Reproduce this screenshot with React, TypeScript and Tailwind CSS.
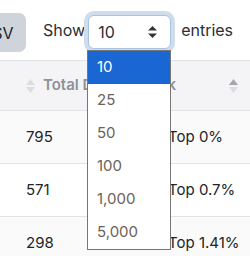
import React from "react";

const options = ["10", "25", "50", "100", "1,000", "5,000"];

const rows = [
  { total: "795", rank: "Top 0%", striped: true },
  { total: "571", rank: "Top 0.7%", striped: false },
  { total: "298", rank: "Top 1.41%", striped: true },
];

const SortIcon = ({ active = false }: { active?: boolean }) => (
  <svg width="9" height="14" viewBox="0 0 9 14">
    <path d="M4.5 0 L9 6 L0 6 Z" fill={active ? "#a3a6ab" : "#dcdde0"} />
    <path d="M4.5 14 L9 8 L0 8 Z" fill="#dcdde0" />
  </svg>
);

const App = () => {
  return (
    <div className="relative w-[250px] h-[256px] overflow-hidden bg-white font-['Inter',sans-serif] text-[#212529]">
      {/* toolbar */}
      <div className="h-[60px] flex items-center">
        <button className="-ml-[32px] mt-[5px] w-[58px] h-[39px] bg-[#ced4da] rounded-[7px] text-[16px] text-[#212529]">
          CSV
        </button>
        <span className="ml-[17px] text-[16px] text-[#2b2f33]">Show</span>
        <div className="ml-[3px] mt-[3px] w-[83px] h-[34px] flex items-center justify-between pl-[9px] pr-[13px] border border-[#a8c3e6] rounded-[6px] ring-4 ring-[#cfdcec] bg-white">
          <span className="text-[16px] text-[#2b2f33]">10</span>
          <svg width="9" height="12" viewBox="0 0 9 12">
            <path d="M4.5 0 L9 4.5 L0 4.5 Z" fill="#33373b" />
            <path d="M4.5 12 L9 7.5 L0 7.5 Z" fill="#33373b" />
          </svg>
        </div>
        <span className="ml-[10px] text-[16px] text-[#2b2f33]">entries</span>
      </div>

      {/* table header */}
      <div className="h-[51px] flex items-center bg-[#f4f4f6] border-t border-b border-[#e2e3e6]">
        <div className="ml-[26px]">
          <SortIcon />
        </div>
        <span className="ml-[8px] w-[97px] whitespace-nowrap overflow-hidden text-[15px] font-semibold text-[#8d9198]">
          Total Donations
        </span>
        <span className="text-[15px] font-semibold text-[#8d9198]">Rank</span>
        <div className="ml-auto mr-[12px]">
          <SortIcon active />
        </div>
      </div>

      {/* rows */}
      {rows.map((r) => (
        <div
          key={r.total}
          className={`h-[53px] flex items-center border-b border-[#e2e3e6] text-[15px] ${
            r.striped ? "bg-[#fafafa]" : "bg-white"
          }`}
        >
          <span className="ml-[26px] w-[142px]">{r.total}</span>
          <span className="whitespace-nowrap">{r.rank}</span>
        </div>
      ))}

      {/* open select list */}
      <div className="absolute left-[87px] top-[50px] w-[84px] border border-[#767676] bg-white">
        {options.map((o, i) => (
          <div
            key={o}
            className={`h-[33px] flex items-center pl-[9px] text-[15px] ${
              i === 0 ? "bg-[#1a66d2] text-white" : "text-[#6b6258]"
            }`}
          >
            {o}
          </div>
        ))}
      </div>
    </div>
  );
};

export default App;
